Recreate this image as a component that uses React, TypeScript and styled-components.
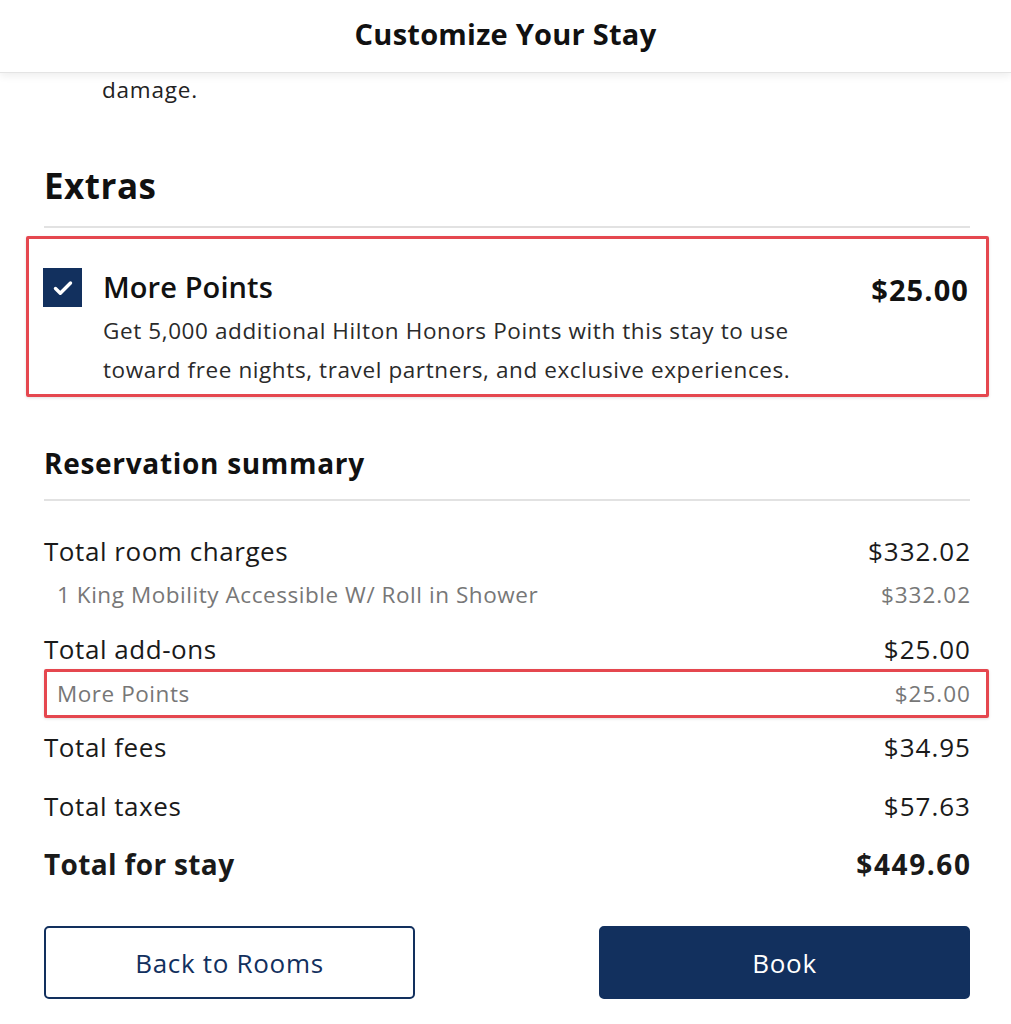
import React from "react";
import styled, { createGlobalStyle } from "styled-components";

const Global = createGlobalStyle`
  html, body { margin: 0; padding: 0; background: #fff; }
  body { font-family: "Open Sans", "Noto Sans", sans-serif; color: #1d1d1d; }
  * { box-sizing: border-box; }
`;

const Page = styled.div`
  width: 1011px;
  height: 1024px;
  overflow: hidden;
  display: flex;
  flex-direction: column;
  background: #fff;
`;

const Header = styled.header`
  height: 73px;
  flex-shrink: 0;
  display: flex;
  align-items: center;
  justify-content: center;
  padding-bottom: 5px;
  background: #fff;
  border-bottom: 1px solid #e4e4e4;
  box-shadow: 0 3px 8px rgba(0, 0, 0, 0.07);
  position: relative;
  z-index: 1;
`;

const Title = styled.h1`
  margin: 0;
  font-size: 29px;
  line-height: 36px;
  font-weight: 700;
  color: #111;
  letter-spacing: 0.25px;
`;

const Body = styled.main`
  padding: 0 41px 0 44px;
  display: flex;
  flex-direction: column;
`;

const Carry = styled.p`
  margin: 2px 0 0 58px;
  font-size: 22.5px;
  line-height: 30px;
  letter-spacing: 0.8px;
  color: #222;
`;

const SectionTitle = styled.h2<{ $size: number; $lh: number; $pad: number; $ls: number }>`
  margin: 0;
  font-size: ${(p) => p.$size}px;
  line-height: ${(p) => p.$lh}px;
  letter-spacing: ${(p) => p.$ls}px;
  font-weight: 700;
  color: #111;
  padding-bottom: ${(p) => p.$pad}px;
  border-bottom: 2px solid #e2e2e2;
`;

const ExtrasSection = styled.section`
  margin-top: 58px;
`;

const ExtraCard = styled.div`
  margin: 8px -19px 0 -18px;
  border: 3px solid #e5474f;
  border-radius: 2px;
  box-shadow: 0 1px 3px rgba(0, 0, 0, 0.12);
  padding: 29px 17px 5px 14px;
  display: grid;
  grid-template-columns: 39px 1fr auto;
  column-gap: 21px;
  align-items: start;
`;

const Check = styled.div`
  width: 39px;
  height: 39px;
  background: #12305e;
  display: flex;
  align-items: center;
  justify-content: center;
`;

const ExtraText = styled.div`
  display: flex;
  flex-direction: column;
`;

const ExtraName = styled.div`
  font-size: 29px;
  font-weight: 600;
  line-height: 40px;
  letter-spacing: 0.1px;
  color: #111;
  margin-top: -1px;
`;

const ExtraDesc = styled.div`
  font-size: 22.5px;
  line-height: 39px;
  letter-spacing: 0.6px;
  color: #2a2a2a;
  margin-top: 4px;
`;

const ExtraPrice = styled.div`
  font-size: 29px;
  font-weight: 700;
  line-height: 40px;
  letter-spacing: 1.1px;
  color: #111;
  margin-top: 2px;
`;

const SummarySection = styled.section`
  margin-top: 48px;
`;

const Rows = styled.div`
  display: flex;
  flex-direction: column;
  margin-top: 28px;
`;

const Row = styled.div<{ $sub?: boolean; $bold?: boolean; $h: number; $mt: number; $boxed?: boolean }>`
  display: flex;
  justify-content: space-between;
  align-items: center;
  height: ${(p) => p.$h}px;
  margin-top: ${(p) => p.$mt}px;
  font-size: ${(p) => (p.$sub ? 22.5 : p.$bold ? 28 : 26)}px;
  font-weight: ${(p) => (p.$bold ? 700 : 400)};
  letter-spacing: ${(p) => (p.$bold ? 0.35 : 0.55)}px;
  color: ${(p) => (p.$sub ? "#777" : "#1a1a1a")};
  padding-left: ${(p) => (p.$sub ? 13 : 0)}px;
  ${(p) =>
    p.$boxed &&
    `
    border: 3px solid #e5474f;
    border-radius: 2px;
    box-shadow: 0 1px 3px rgba(0,0,0,0.12);
    margin-right: -19px;
    padding-left: 10px;
    padding-right: 16px;
  `}
`;

const Amount = styled.span<{ $bold?: boolean }>`
  letter-spacing: ${(p) => (p.$bold ? 1.6 : 1)}px;
  margin-right: ${(p) => (p.$bold ? -1.6 : -1)}px;
`;

const Buttons = styled.div`
  display: flex;
  justify-content: space-between;
  margin-top: 42px;
`;

const Button = styled.button<{ $primary?: boolean }>`
  width: 371px;
  height: 73px;
  border-radius: 5px;
  font-family: inherit;
  font-size: 26px;
  font-weight: 500;
  letter-spacing: 0.7px;
  cursor: pointer;
  border: 2px solid #12305e;
  background: ${(p) => (p.$primary ? "#12305e" : "#fff")};
  color: ${(p) => (p.$primary ? "#fff" : "#12305e")};
`;

const rows = [
  { l: "Total room charges", r: "$332.02", h: 44, mt: 0 },
  { l: "1 King Mobility Accessible W/ Roll in Shower", r: "$332.02", sub: true, h: 36, mt: 3 },
  { l: "Total add-ons", r: "$25.00", h: 40, mt: 17 },
  { l: "More Points", r: "$25.00", sub: true, boxed: true, h: 49, mt: 0 },
  { l: "Total fees", r: "$34.95", h: 40, mt: 9 },
  { l: "Total taxes", r: "$57.63", h: 40, mt: 19 },
  { l: "Total for stay", r: "$449.60", bold: true, h: 40, mt: 18 },
];

export default function App() {
  return (
    <Page>
      <Global />
      <Header>
        <Title>Customize Your Stay</Title>
      </Header>
      <Body>
        <Carry>damage.</Carry>
        <ExtrasSection>
          <SectionTitle $size={35} $lh={46} $pad={17} $ls={0.5}>
            Extras
          </SectionTitle>
          <ExtraCard>
            <Check>
              <svg width="24" height="24" viewBox="0 0 24 24" fill="none">
                <path d="M4.5 12.5l4.8 4.8L19.5 7" stroke="#fff" strokeWidth="3.4" strokeLinecap="round" strokeLinejoin="round" />
              </svg>
            </Check>
            <ExtraText>
              <ExtraName>More Points</ExtraName>
              <ExtraDesc>
                Get 5,000 additional Hilton Honors Points with this stay to use
                <br />
                toward free nights, travel partners, and exclusive experiences.
              </ExtraDesc>
            </ExtraText>
            <ExtraPrice>$25.00</ExtraPrice>
          </ExtraCard>
        </ExtrasSection>
        <SummarySection>
          <SectionTitle $size={28} $lh={36} $pad={18} $ls={0.7}>
            Reservation summary
          </SectionTitle>
          <Rows>
            {rows.map((r, i) => (
              <Row key={i} $sub={r.sub} $bold={r.bold} $h={r.h} $mt={r.mt} $boxed={r.boxed}>
                <span>{r.l}</span>
                <Amount $bold={r.bold}>{r.r}</Amount>
              </Row>
            ))}
          </Rows>
        </SummarySection>
        <Buttons>
          <Button>Back to Rooms</Button>
          <Button $primary>Book</Button>
        </Buttons>
      </Body>
    </Page>
  );
}
